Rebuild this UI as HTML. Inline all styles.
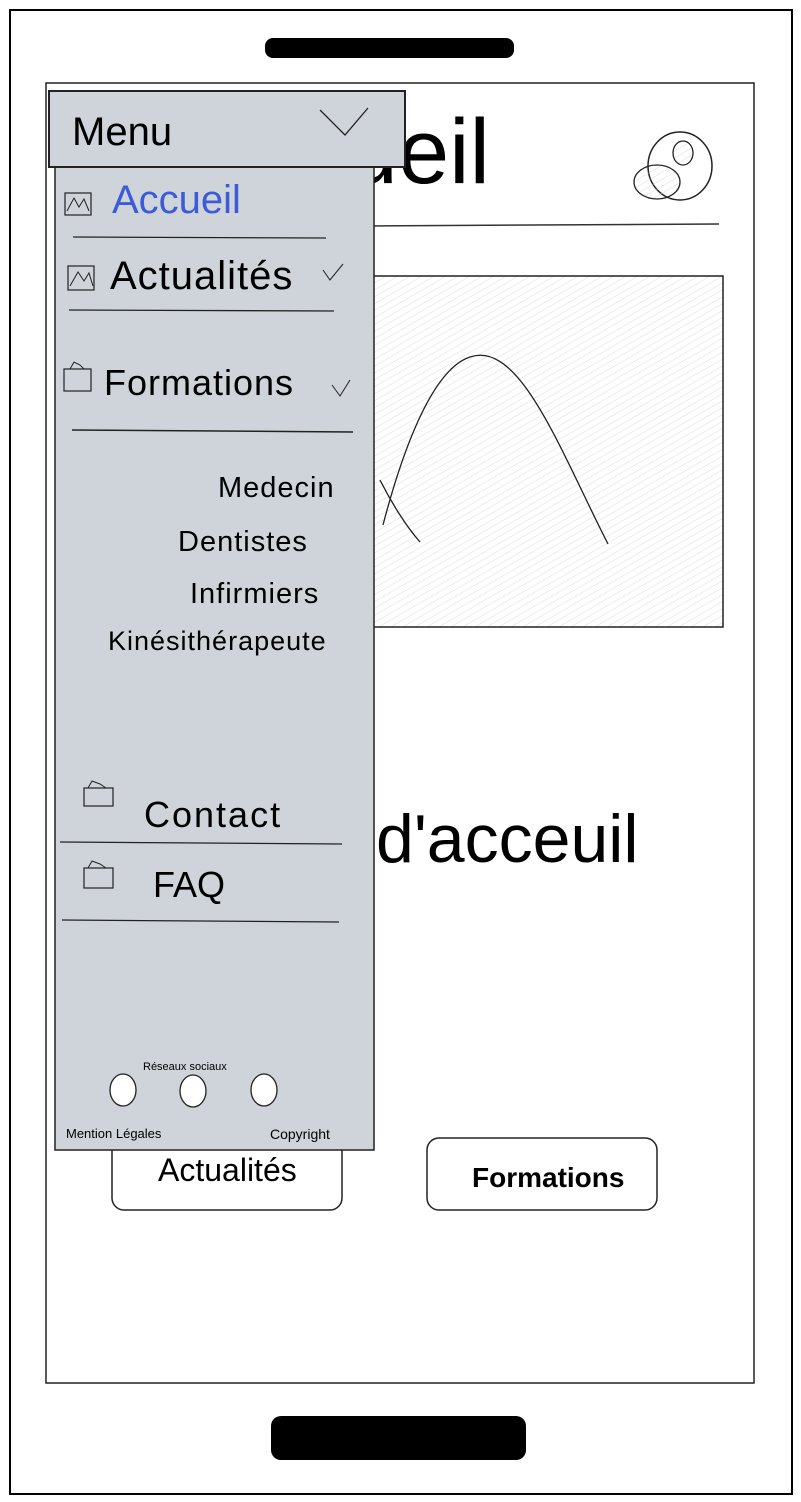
<!DOCTYPE html>
<html><head><meta charset="utf-8"><style>
html,body{margin:0;padding:0;background:#fff;}
body{width:801px;height:1502px;position:relative;overflow:hidden;font-family:"Liberation Sans","DejaVu Sans",sans-serif;color:#000;}
.a{position:absolute;white-space:nowrap;}
</style></head><body>
<svg class="a" style="left:0;top:0" width="801" height="1502">
<defs><pattern id="h" width="6" height="6" patternUnits="userSpaceOnUse" patternTransform="rotate(60)"><line x1="0" y1="0" x2="0" y2="6" stroke="#ccc" stroke-width="0.7"/></pattern></defs>
<rect x="10" y="10" width="782" height="1484" fill="none" stroke="#000" stroke-width="2"/>
<rect x="265" y="38" width="249" height="20" rx="8" fill="#000"/>
<rect x="271" y="1416" width="255" height="44" rx="10" fill="#000"/>
<rect x="46" y="83" width="708" height="1300" fill="none" stroke="#222" stroke-width="1.5"/>
<line x1="360" y1="226" x2="719" y2="224" stroke="#333" stroke-width="1.5"/>
<rect x="360" y="276" width="363" height="351" fill="url(#h)" stroke="#222" stroke-width="1.5"/>
<path d="M383 525 C400 460 430 370 470 357 C520 340 560 450 608 544" fill="none" stroke="#222" stroke-width="1.3"/>
<path d="M380 480 C390 500 405 525 420 542" fill="none" stroke="#222" stroke-width="1.3"/>
<ellipse cx="680" cy="166" rx="32" ry="34" fill="none" stroke="#222" stroke-width="1.5"/>
<ellipse cx="683" cy="153" rx="10" ry="12" fill="url(#h)" stroke="#222" stroke-width="1.3"/>
<ellipse cx="657" cy="182" rx="23" ry="17" fill="url(#h)" stroke="#222" stroke-width="1.3"/>
<rect x="112" y="1138" width="230" height="72" rx="12" fill="#fff" stroke="#222" stroke-width="1.5"/>
<rect x="427" y="1138" width="230" height="72" rx="12" fill="#fff" stroke="#222" stroke-width="1.5"/>
</svg>
<div class="a" style="right:311px;top:100px;font-size:92px;">Accueil</div>
<div class="a" style="left:376px;top:800px;font-size:68px;">d'acceuil</div>
<div class="a" style="left:158px;top:1152px;font-size:32px;">Actualités</div>
<div class="a" style="left:472px;top:1162px;font-size:28px;font-weight:bold;">Formations</div>
<svg class="a" style="left:0;top:0" width="801" height="1502">
<rect x="55" y="167" width="319" height="983" fill="#ced4da" stroke="#222" stroke-width="1.5"/>
<rect x="49" y="91" width="356" height="76" fill="#ced4da" stroke="#222" stroke-width="2"/>
<path d="M320 110 L345 135 L368 108" fill="none" stroke="#222" stroke-width="1.3"/>
<line x1="73" y1="237" x2="326" y2="238" stroke="#222" stroke-width="1.3"/>
<line x1="69" y1="310" x2="334" y2="311" stroke="#222" stroke-width="1.3"/>
<line x1="72" y1="430" x2="353" y2="432" stroke="#222" stroke-width="1.5"/>
<line x1="60" y1="842" x2="342" y2="844" stroke="#222" stroke-width="1.3"/>
<line x1="62" y1="920" x2="339" y2="922" stroke="#222" stroke-width="1.3"/>
<rect x="65" y="193" width="26" height="22" fill="none" stroke="#222" stroke-width="1.2"/>
<path d="M67 211 L74 198 L79 207 L84 199 L89 211" fill="none" stroke="#222"/>
<rect x="68" y="266" width="26" height="24" fill="none" stroke="#222" stroke-width="1.2"/>
<path d="M70 286 L78 272 L84 281 L89 273 L93 286" fill="none" stroke="#222"/>
<rect x="64" y="369" width="27" height="22" fill="none" stroke="#222" stroke-width="1.2"/>
<path d="M70 369 L74 362 L80 365 L84 369" fill="none" stroke="#222"/>
<rect x="84" y="788" width="29" height="18" fill="none" stroke="#222" stroke-width="1.2"/>
<path d="M88 788 L92 781 L100 784 L106 788" fill="none" stroke="#222"/>
<rect x="84" y="868" width="29" height="20" fill="none" stroke="#222" stroke-width="1.2"/>
<path d="M88 868 L92 861 L100 864 L106 868" fill="none" stroke="#222"/>
<path d="M323 270 L330 280 L343 264" fill="none" stroke="#222"/>
<path d="M332 385 L340 396 L350 380" fill="none" stroke="#222"/>
<ellipse cx="123" cy="1090" rx="13" ry="16" fill="#fff" stroke="#222" stroke-width="1.3"/>
<ellipse cx="193" cy="1091" rx="13" ry="16" fill="#fff" stroke="#222" stroke-width="1.3"/>
<ellipse cx="264" cy="1090" rx="13" ry="16" fill="#fff" stroke="#222" stroke-width="1.3"/>
</svg>
<div class="a" style="left:72px;top:110px;font-size:40px;">Menu</div>
<div class="a" style="left:112px;top:178px;font-size:40px;color:#3b5bd9;">Accueil</div>
<div class="a" style="left:110px;top:254px;font-size:40px;letter-spacing:1px;">Actualités</div>
<div class="a" style="left:104px;top:362px;font-size:36px;letter-spacing:1px;">Formations</div>
<div class="a" style="left:218px;top:472px;font-size:29px;letter-spacing:1px;">Medecin</div>
<div class="a" style="left:178px;top:526px;font-size:29px;letter-spacing:1px;">Dentistes</div>
<div class="a" style="left:190px;top:578px;font-size:29px;letter-spacing:1px;">Infirmiers</div>
<div class="a" style="left:108px;top:626px;font-size:27px;letter-spacing:1px;">Kinésithérapeute</div>
<div class="a" style="left:144px;top:794px;font-size:36px;letter-spacing:2px;">Contact</div>
<div class="a" style="left:153px;top:864px;font-size:36px;">FAQ</div>
<div class="a" style="left:143px;top:1061px;font-size:11px;">Réseaux sociaux</div>
<div class="a" style="left:66px;top:1126px;font-size:13px;">Mention Légales</div>
<div class="a" style="left:270px;top:1126px;font-size:14px;">Copyright</div>
</body></html>
